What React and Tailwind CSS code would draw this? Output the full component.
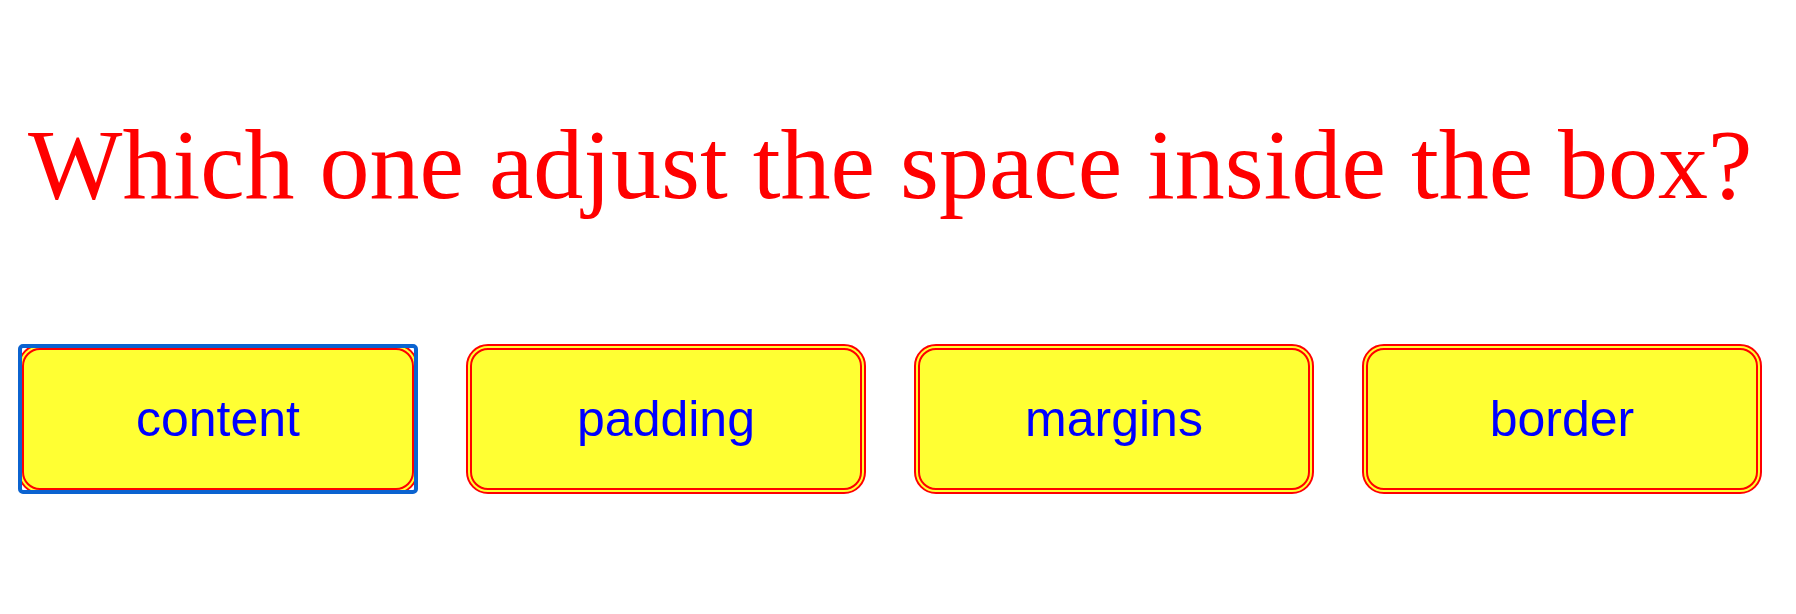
import React from 'react';

const options = ['content', 'padding', 'margins', 'border'];

const App = () => {
    return (
        <div className="min-h-[614px] w-full bg-white">
            {/* Question */}
            <h1
                className="pt-[115px] pl-[28px] whitespace-nowrap text-[100px] leading-none font-normal text-[#ff0000]"
                style={{ fontFamily: '"Liberation Serif", "Times New Roman", serif' }}
            >
                Which one adjust the space inside the box?
            </h1>

            {/* Answers */}
            <div className="flex gap-[48px] pl-[18px] mt-[129px]">
                {options.map((option, i) => (
                    <button
                        key={option}
                        className="relative flex items-center justify-center w-[400px] h-[150px] rounded-[22px] border-[6px] border-double border-[#ff0000] bg-[#ffff33] text-[50px] text-[#0000ff]"
                        style={{ fontFamily: '"Liberation Sans", Arial, sans-serif' }}
                    >
                        {option}
                        {i === 0 && (
                            <span className="absolute -inset-[6px] rounded-[5px] border-[4px] border-[#0b63d0] pointer-events-none" />
                        )}
                    </button>
                ))}
            </div>
        </div>
    );
};

export default App;
